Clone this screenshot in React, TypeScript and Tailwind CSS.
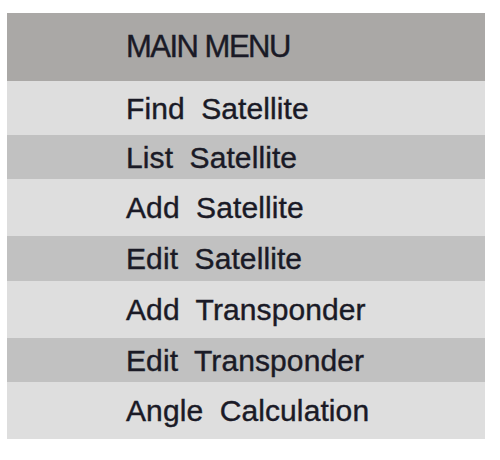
import React from "react";

const items = [
  { label: "Find Satellite", h: "h-[54px]", bg: "bg-[#dedede]" },
  { label: "List Satellite", h: "h-[44px]", bg: "bg-[#c1c1c1]" },
  { label: "Add Satellite", h: "h-[57px]", bg: "bg-[#dedede]" },
  { label: "Edit Satellite", h: "h-[45px]", bg: "bg-[#c1c1c1]" },
  { label: "Add Transponder", h: "h-[57px]", bg: "bg-[#dedede]" },
  { label: "Edit Transponder", h: "h-[44px]", bg: "bg-[#c1c1c1]" },
  { label: "Angle Calculation", h: "h-[57px]", bg: "bg-[#dedede]" },
];

export default function App() {
  return (
    <div className="w-[500px] h-[460px] bg-white pt-[13px] pl-[7px]">
      <div
        className="w-[478px] flex flex-col text-[#1a1a26] [-webkit-text-stroke:0.4px_#1a1a26]"
        style={{ fontFamily: '"Liberation Sans", Arial, sans-serif' }}
      >
        <div className="h-[68px] bg-[#aaa8a6] flex items-center pl-[119px] text-[31px] tracking-[-1.5px]">
          MAIN MENU
        </div>
        {items.map((it) => (
          <div
            key={it.label}
            className={`${it.h} ${it.bg} flex items-center pl-[119px] text-[30px] tracking-[0.1px] [word-spacing:8px]`}
          >
            {it.label}
          </div>
        ))}
      </div>
    </div>
  );
}
